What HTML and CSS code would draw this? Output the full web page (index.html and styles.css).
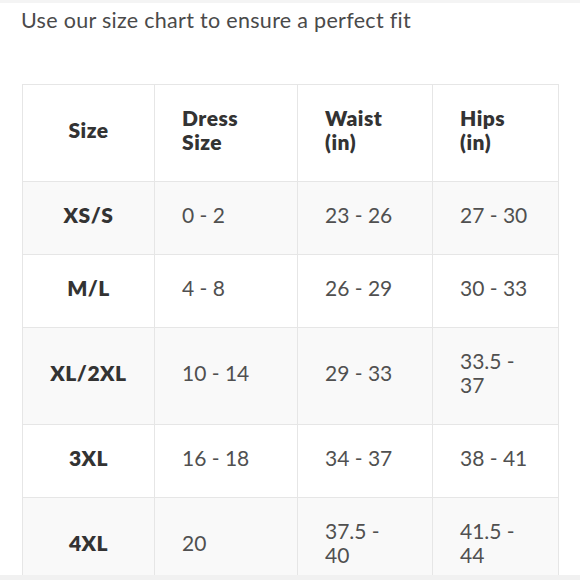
FILE: index.html
```html
<!DOCTYPE html>
<html lang="en">
<head>
<meta charset="utf-8">
<title>Size chart</title>
<link rel="stylesheet" href="styles.css">
</head>
<body>
<div class="top-strip"></div>
<p class="intro">Use our size chart to ensure a perfect fit</p>
<table class="chart">
  <colgroup>
    <col class="c1"><col class="c2"><col class="c3"><col class="c4">
  </colgroup>
  <thead>
    <tr>
      <th class="size">Size</th>
      <th>Dress<br>Size</th>
      <th>Waist<br>(in)</th>
      <th>Hips<br>(in)</th>
    </tr>
  </thead>
  <tbody>
    <tr class="alt"><th class="size">XS/S</th><td>0 - 2</td><td>23 - 26</td><td>27 - 30</td></tr>
    <tr><th class="size">M/L</th><td>4 - 8</td><td>26 - 29</td><td>30 - 33</td></tr>
    <tr class="alt"><th class="size">XL/2XL</th><td>10 - 14</td><td>29 - 33</td><td>33.5 -<br>37</td></tr>
    <tr><th class="size">3XL</th><td>16 - 18</td><td>34 - 37</td><td>38 - 41</td></tr>
    <tr class="alt"><th class="size">4XL</th><td>20</td><td>37.5 -<br>40</td><td>41.5 -<br>44</td></tr>
  </tbody>
</table>
<div class="bottom-strip"></div>
</body>
</html>
```
FILE: styles.css
```css
html, body {
  margin: 0;
  padding: 0;
  background: #ffffff;
  height: 580px;
  overflow: hidden;
}
body {
  font-family: Lato, "Open Sans", sans-serif;
  color: #4a4a4a;
}
.top-strip {
  height: 3px;
  background: #f4f4f4;
}
.intro {
  margin: 3px 0 0 21px;
  font-size: 21.5px;
  line-height: 28px;
  color: #4a4a4a;
  letter-spacing: 0.3px;
}
.chart {
  margin: 50px 0 0 22px;
  border-collapse: collapse;
  table-layout: fixed;
  width: 536px;
  font-size: 21px;
  line-height: 24px;
}
.c1 { width: 132px; }
.c2 { width: 143px; }
.c3 { width: 135px; }
.c4 { width: 126px; }
.chart th, .chart td {
  border: 1px solid #e6e6e6;
  padding: 21px 10px 27px 27px;
  text-align: left;
  vertical-align: middle;
}
.chart th {
  font-weight: 800;
  color: #333333;
  letter-spacing: 0.5px;
}
.chart td {
  font-weight: 400;
  color: #505050;
}
.chart th.size {
  text-align: center;
  padding-left: 10px;
}
.chart tr.alt th, .chart tr.alt td {
  background: #f9f9f9;
}
.bottom-strip {
  position: fixed;
  left: 0;
  right: 0;
  bottom: 0;
  height: 5px;
  background: #f1f1f1;
}
```
